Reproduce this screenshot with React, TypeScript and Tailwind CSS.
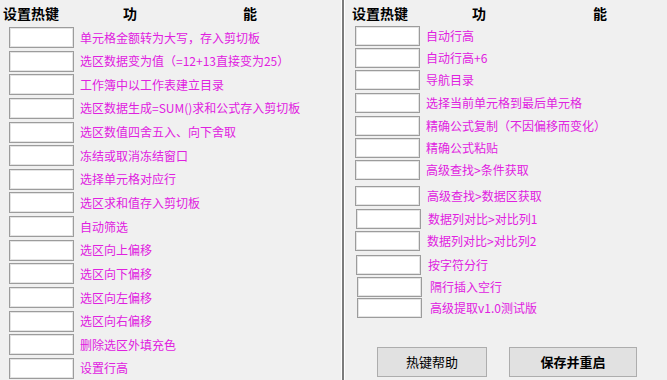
const leftItems = [
  '单元格金额转为大写，存入剪切板',
  '选区数据变为值（=12+13直接变为25）',
  '工作簿中以工作表建立目录',
  '选区数据生成=SUM()求和公式存入剪切板',
  '选区数值四舍五入、向下舍取',
  '冻结或取消冻结窗口',
  '选择单元格对应行',
  '选区求和值存入剪切板',
  '自动筛选',
  '选区向上偏移',
  '选区向下偏移',
  '选区向左偏移',
  '选区向右偏移',
  '删除选区外填充色',
  '设置行高',
]

// the right column in the original is hand placed, so each row carries its own nudge
const rightItems = [
  { text: '自动行高', row: 'mt-0', box: 'ml-0', label: 'ml-[6px]' },
  { text: '自动行高+6', row: 'mt-[2px]', box: 'ml-0', label: 'ml-[6px]' },
  { text: '导航目录', row: 'mt-[2px]', box: 'ml-0', label: 'ml-[6px]' },
  { text: '选择当前单元格到最后单元格', row: 'mt-[3px]', box: 'ml-0', label: 'ml-[6px]' },
  { text: '精确公式复制（不因偏移而变化）', row: 'mt-[3px]', box: 'ml-0', label: 'ml-[6px]' },
  { text: '精确公式粘贴', row: 'mt-[2px]', box: 'ml-0', label: 'ml-[6px]' },
  { text: '高级查找>条件获取', row: 'mt-[2px]', box: 'ml-0', label: 'ml-[6px]' },
  { text: '高级查找>数据区获取', row: 'mt-[6px]', box: 'ml-0', label: 'ml-[7px]' },
  { text: '数据列对比>对比列1', row: 'mt-[3px]', box: 'ml-[1px]', label: 'ml-[7px]' },
  { text: '数据列对比>对比列2', row: 'mt-[2px]', box: 'ml-0', label: 'ml-[7px]' },
  { text: '按字符分行', row: 'mt-[4px]', box: 'ml-[1px]', label: 'ml-[7px]' },
  { text: '隔行插入空行', row: 'mt-[2px]', box: 'ml-[2px]', label: 'ml-[8px]' },
  { text: '高级提取v1.0测试版', row: 'mt-[1px]', box: 'ml-[2px]', label: 'ml-[8px]' },
]

function KeyBox({ className = '' }: { className?: string }) {
  return (
    <div
      className={`w-[65px] h-[20px] shrink-0 bg-white border border-[#9c9c9c] shadow-[inset_0_0_0_1px_#e4e4e4] ${className}`}
    />
  )
}

function Header({ gapA, gapB }: { gapA: string; gapB: string }) {
  return (
    <div className="flex items-center h-[18px] text-[14px] font-bold text-black leading-none">
      <span>设置热键</span>
      <span className={gapA}>功</span>
      <span className={gapB}>能</span>
    </div>
  )
}

export default function App() {
  return (
    <div
      className="w-[667px] h-[380px] overflow-hidden bg-[#f0f0f0] flex"
      style={{ fontFamily: '"Microsoft YaHei", "Noto Sans CJK SC", "Noto Sans", sans-serif' }}
    >
      {/* left panel */}
      <div className="w-[341px] shrink-0 pt-[4px] pl-[3px]">
        <Header gapA="ml-[64px]" gapB="ml-[106px]" />
        <div className="mt-[5px] ml-[6px] flex flex-col gap-[2.65px]">
          {leftItems.map((t) => (
            <div key={t} className="flex items-center h-[21px]">
              <KeyBox className="h-[21px]" />
              <span className="ml-[6px] text-[12px] leading-none text-[#e020e0] whitespace-nowrap">{t}</span>
            </div>
          ))}
        </div>
      </div>

      {/* divider */}
      <div className="w-[4px] h-full shrink-0 border-l border-r border-white bg-[#7c7c7c]" />

      {/* right panel */}
      <div className="flex-1 flex flex-col pt-[4px] pl-[7px]">
        <Header gapA="ml-[64px]" gapB="ml-[107px]" />
        <div className="mt-[4px] ml-[3px] flex flex-col">
          {rightItems.map((r) => (
            <div key={r.text} className={`flex items-center ${r.row}`}>
              <KeyBox className={r.box} />
              <span className={`${r.label} text-[12px] leading-none text-[#e020e0] whitespace-nowrap`}>{r.text}</span>
            </div>
          ))}
        </div>
        <div className="mt-auto mb-[3px] ml-[25px] flex gap-[22px]">
          <button className="w-[110px] h-[30px] bg-[#e1e1e1] border border-[#adadad] text-[13px] text-black">
            热键帮助
          </button>
          <button className="w-[128px] h-[30px] bg-[#e1e1e1] border border-[#adadad] text-[13px] font-bold text-black">
            保存并重启
          </button>
        </div>
      </div>
    </div>
  )
}
